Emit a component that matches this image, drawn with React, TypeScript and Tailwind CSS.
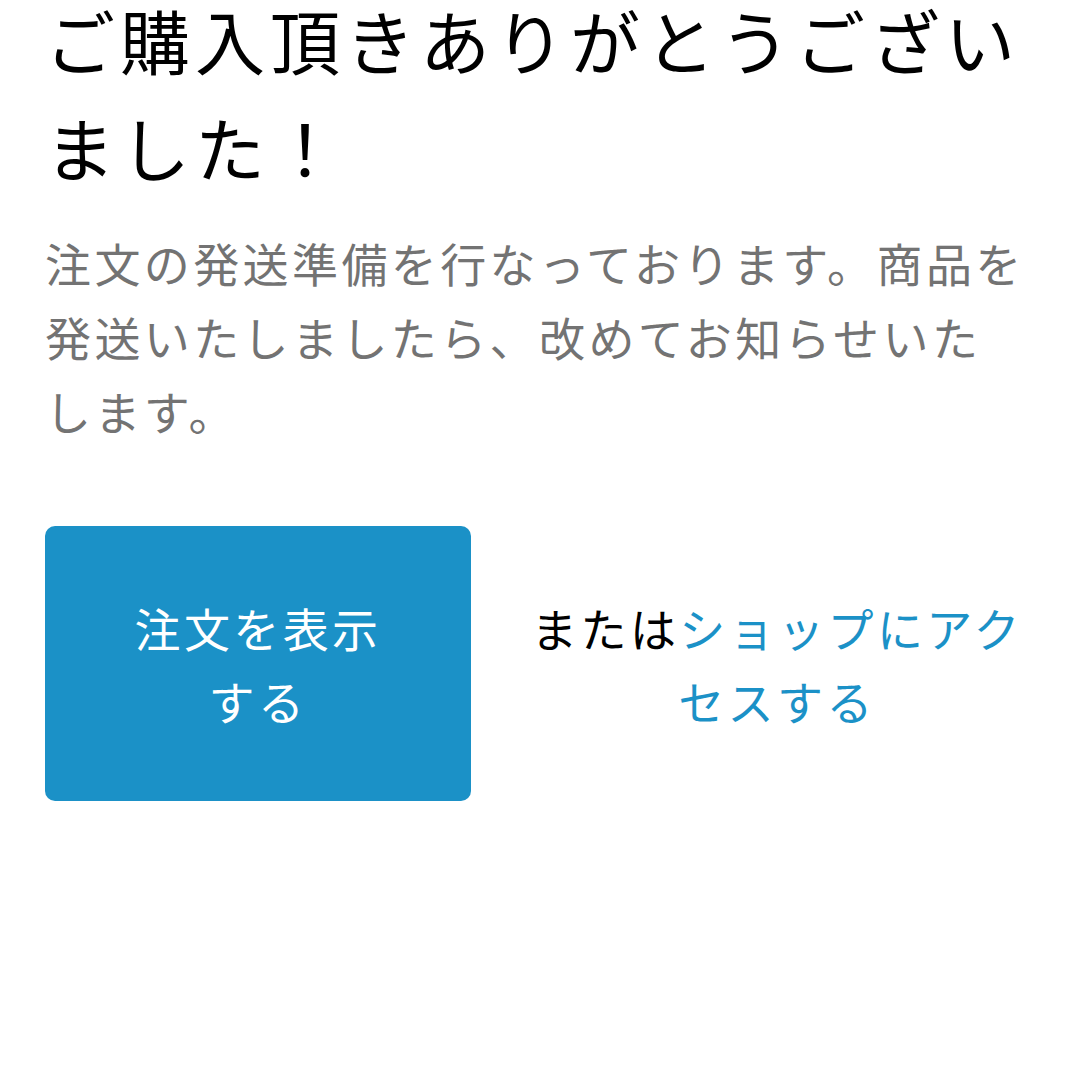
import React from 'react';

const font = { fontFamily: '"Noto Sans CJK JP", "Noto Sans", sans-serif' };

export default function App() {
  return (
    <div className="min-h-[1080px] w-[1080px] bg-white overflow-hidden" style={font}>
      <div className="px-[45px] -mt-[14px]">
        <h1 className="text-[70px] leading-[107px] tracking-[5px] text-black font-normal">
          ご購入頂きありがとうございました！
        </h1>
        <p className="mt-[25px] text-[46px] leading-[74px] tracking-[3.4px] text-[#737373]">
          注文の発送準備を行なっております。商品を発送いたしましたら、改めてお知らせいた
          <br />
          します。
        </p>

        <div className="mt-[79px] flex items-center">
          <button className="w-[426px] h-[275px] shrink-0 rounded-[10px] bg-[#1b91c7] px-[80px] text-[46px] leading-[73px] tracking-[3.4px] text-white">
            注文を表示する
          </button>
          <div className="ml-[48px] flex-1 text-center text-[46px] leading-[73px] tracking-[3.4px] text-black">
            または<a className="text-[#1b91c7]" href="#">ショップにアクセスする</a>
          </div>
        </div>
      </div>
    </div>
  );
}
